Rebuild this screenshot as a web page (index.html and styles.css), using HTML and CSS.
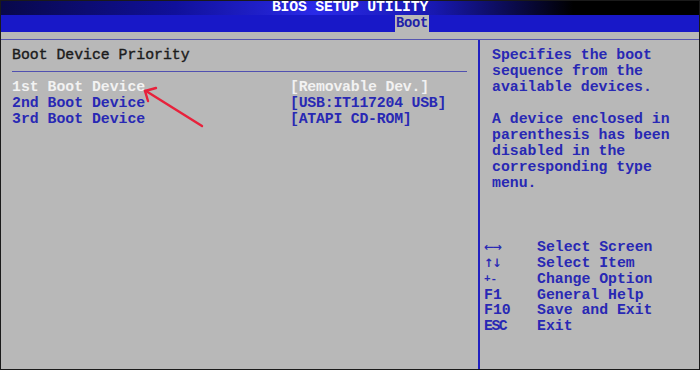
FILE: index.html
```html
<!DOCTYPE html>
<html lang="en">
<head>
    <meta charset="UTF-8">
    <meta name="viewport" content="width=device-width, initial-scale=1.0">
    <title>BIOS Setup Utility</title>
    <link rel="stylesheet" href="styles.css">
</head>
<body>
    <div class="screen">
        <div class="title-bar">
            <span class="title">BIOS SETUP UTILITY</span>
        </div>
        <div class="tab-bar">
            <span class="tab">Boot</span>
        </div>

        <div class="main-box">
            <div class="left-panel">
                <div class="section-heading">Boot Device Priority</div>
                <div class="item selected">
                    <span class="item-name">1st Boot Device</span>
                    <span class="item-value">[Removable Dev.]</span>
                </div>
                <div class="item">
                    <span class="item-name">2nd Boot Device</span>
                    <span class="item-value">[USB:IT117204 USB]</span>
                </div>
                <div class="item">
                    <span class="item-name">3rd Boot Device</span>
                    <span class="item-value">[ATAPI CD-ROM]</span>
                </div>
            </div>

            <div class="right-panel">
                <div class="help-text">
                    <p>Specifies the boot<br>sequence from the<br>available devices.</p>
                    <p>A device enclosed in<br>parenthesis has been<br>disabled in the<br>corresponding type<br>menu.</p>
                </div>
                <div class="keys">
                    <div class="key-row"><span class="key arrows">&larr;&rarr;</span><span>Select Screen</span></div>
                    <div class="key-row"><span class="key arrows">&uarr;&darr;</span><span>Select Item</span></div>
                    <div class="key-row"><span class="key small">+-</span><span>Change Option</span></div>
                    <div class="key-row"><span class="key">F1</span><span>General Help</span></div>
                    <div class="key-row"><span class="key">F10</span><span>Save and Exit</span></div>
                    <div class="key-row"><span class="key narrow">ESC</span><span>Exit</span></div>
                </div>
            </div>
        </div>

        <!-- red pointer arrow drawn over the first item -->
        <svg class="pointer" width="700" height="370" viewBox="0 0 700 370">
            <g stroke="#e8213b" stroke-width="2.4" stroke-linecap="round" fill="none">
                <line x1="202" y1="126" x2="146" y2="91"/>
                <line x1="145" y1="91" x2="156" y2="88"/>
                <line x1="145" y1="91" x2="148" y2="101"/>
            </g>
        </svg>
    </div>
</body>
</html>
```

FILE: styles.css
```css
html, body {
    margin: 0;
    padding: 0;
}

body {
    width: 700px;
    height: 370px;
    overflow: hidden;
    font-family: "Liberation Mono", "DejaVu Sans Mono", monospace;
    font-size: 14.8px;
    font-weight: bold;
}

.screen {
    position: relative;
    width: 700px;
    height: 370px;
    box-sizing: border-box;
    background-color: #b8b8b8;
    border: 1px solid #1a1a1a;
    display: flex;
    flex-direction: column;
}

.title-bar {
    height: 14px;
    display: flex;
    justify-content: center;
    align-items: flex-start;
    background: linear-gradient(to right, #08084a 0%, #10109a 25%, #2a2ae8 45%, #1818b0 62%, #000000 82%, #000000 100%);
}

.title {
    color: #ffffff;
    font-size: 14.8px;
    line-height: 15px;
    margin-top: -1px;
    letter-spacing: -0.2px;
}

.tab-bar {
    height: 17px;
    background-color: #1818c8;
    display: flex;
    padding-left: 394px;
}

.tab {
    background-color: #b8b8b8;
    color: #2020a8;
    padding: 0 1px;
    font-size: 13.8px;
    line-height: 17px;
    letter-spacing: -0.3px;
}

.main-box {
    margin-top: 7px;
    flex: 1;
    border-top: 1px solid #5555b0;
    display: flex;
}

.left-panel {
    width: 466px;
    padding: 7px 0 0 11px;
    border-right: 2px solid #2020c0;
    line-height: 16px;
}

.section-heading {
    color: #1c1c1c;
    font-weight: normal;
    -webkit-text-stroke: 0.4px #1c1c1c;
    padding-bottom: 8px;
    border-bottom: 1px solid #5050b0;
    margin-bottom: 7px;
    width: 455px;
}

.item {
    display: flex;
    color: #2828b4;
}

.item-name {
    width: 278px;
}

.item-value {
    letter-spacing: -0.2px;
}

.item.selected {
    color: #f2f2f2;
}

.right-panel {
    flex: 1;
    display: flex;
    flex-direction: column;
    line-height: 16px;
    color: #2828b4;
}

.help-text {
    padding: 7px 0 0 12px;
}

.help-text p {
    margin: 0 0 16px 0;
}

.keys {
    margin-top: auto;
    margin-bottom: 35px;
    padding-left: 4px;
}

.key-row {
    display: flex;
    height: 15.8px;
}

.key {
    width: 53px;
}

.key.arrows {
    font-family: "DejaVu Sans", sans-serif;
    font-size: 11.5px;
    letter-spacing: -1.5px;
}

.key.small {
    font-size: 11px;
}

.key.narrow {
    letter-spacing: -1.5px;
}

.pointer {
    position: absolute;
    left: -1px;
    top: -1px;
    pointer-events: none;
}
```
